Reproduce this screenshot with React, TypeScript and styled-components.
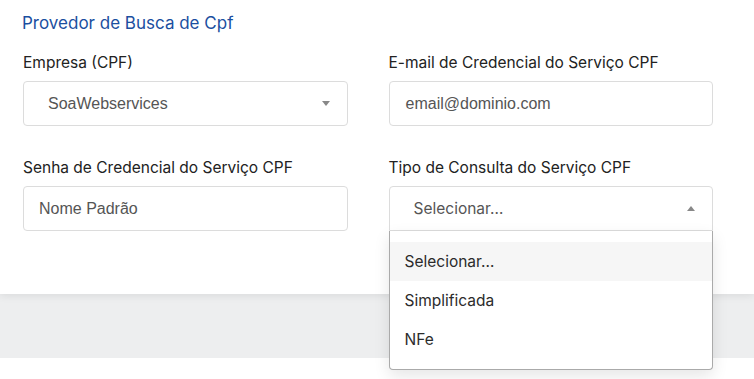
import { createGlobalStyle, styled } from "styled-components";

const GlobalStyle = createGlobalStyle`
  * { box-sizing: border-box; }
  body {
    margin: 0;
    background: #ffffff;
    font-family: "Inter", "Noto Sans", sans-serif;
  }
`;

const Page = styled.div`
  width: 754px;
  height: 379px;
  overflow: hidden;
  background: #ffffff;
`;

const Card = styled.section`
  position: relative;
  z-index: 1;
  height: 294px;
  background: #ffffff;
  padding: 12px 41px 0 22px;
  box-shadow: 0 2px 8px rgba(0, 0, 0, 0.08);
`;

const Title = styled.h2`
  margin: 0 0 20px;
  font-size: 17px;
  font-weight: 400;
  line-height: 22px;
  color: #1b4fa0;
`;

const Grid = styled.div`
  display: grid;
  grid-template-columns: 1fr 1fr;
  column-gap: 41px;
  row-gap: 33px;
  padding-left: 1px;
`;

const Field = styled.div`
  position: relative;
  display: flex;
  flex-direction: column;
  gap: 9px;
`;

const Label = styled.label`
  font-size: 15.5px;
  line-height: 18px;
  color: #222222;
`;

const Box = styled.div<{ $pad: number; $open?: boolean }>`
  display: flex;
  align-items: center;
  justify-content: space-between;
  height: 45px;
  padding: 0 17px 0 ${(p) => p.$pad}px;
  border: 1px solid #dcdcdc;
  border-radius: ${(p) => (p.$open ? "4px 4px 0 0" : "4px")};
  background: #ffffff;
`;

const Value = styled.span<{ $sans?: boolean }>`
  font-family: ${(p) =>
    p.$sans ? '"Inter", sans-serif' : '"Liberation Sans", Arial, sans-serif'};
  font-size: ${(p) => (p.$sans ? "15.5px" : "16px")};
  color: #555555;
`;

const Caret = styled.span<{ $up?: boolean }>`
  width: 0;
  height: 0;
  border-left: 4px solid transparent;
  border-right: 4px solid transparent;
  ${(p) =>
    p.$up ? "border-bottom: 5px solid #888888;" : "border-top: 5px solid #888888;"}
`;

const Menu = styled.ul`
  position: absolute;
  top: 100%;
  left: 0;
  right: 0;
  z-index: 5;
  margin: 0;
  padding: 11px 0 10px;
  list-style: none;
  background: #ffffff;
  border: 1px solid #aaaaaa;
  border-top: none;
  border-radius: 0 0 4px 4px;
  box-shadow: 0 6px 16px rgba(0, 0, 0, 0.1);
`;

const Option = styled.li<{ $active?: boolean }>`
  height: 39px;
  display: flex;
  align-items: center;
  padding: 0 15px;
  font-size: 15.5px;
  color: #2b2b2b;
  background: ${(p) => (p.$active ? "#f6f6f6" : "transparent")};
`;

const Band = styled.div`
  height: 64px;
  background: #edeeef;
`;

const options = ["Selecionar…", "Simplificada", "NFe"];

export default function App() {
  return (
    <Page>
      <GlobalStyle />
      <Card>
        <Title>Provedor de Busca de Cpf</Title>
        <Grid>
          <Field>
            <Label>Empresa (CPF)</Label>
            <Box $pad={24}>
              <Value>SoaWebservices</Value>
              <Caret />
            </Box>
          </Field>
          <Field>
            <Label>E-mail de Credencial do Serviço CPF</Label>
            <Box $pad={16}>
              <Value>email@dominio.com</Value>
            </Box>
          </Field>
          <Field>
            <Label>Senha de Credencial do Serviço CPF</Label>
            <Box $pad={15}>
              <Value>Nome Padrão</Value>
            </Box>
          </Field>
          <Field>
            <Label>Tipo de Consulta do Serviço CPF</Label>
            <Box $pad={24} $open>
              <Value $sans>Selecionar…</Value>
              <Caret $up />
            </Box>
            <Menu>
              {options.map((o, i) => (
                <Option key={o} $active={i === 0}>
                  {o}
                </Option>
              ))}
            </Menu>
          </Field>
        </Grid>
      </Card>
      <Band />
    </Page>
  );
}
